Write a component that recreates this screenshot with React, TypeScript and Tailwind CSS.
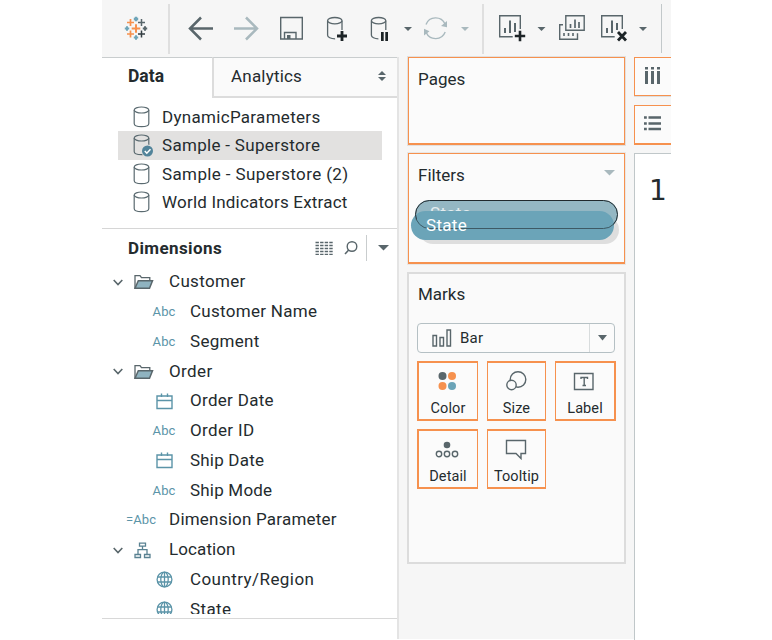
import type { ReactNode } from "react";

type GlyphProps = { x: number; y: number; w: number; h: number; className?: string; children: ReactNode };

// Drawing cell whose viewBox is expressed in window coordinates.
function Glyph({ x, y, w, h, className = "", children }: GlyphProps) {
  return (
    <svg width={w} height={h} viewBox={`${x} ${y} ${w} ${h}`} fill="none" className={`block shrink-0 ${className}`}>
      {children}
    </svg>
  );
}

const slate = "#59666b";
const teal = "#5b94a8";

function Plus({ x, y, r, c, w }: { x: number; y: number; r: number; c: string; w: number }) {
  return <path d={`M${x - r} ${y}H${x + r}M${x} ${y - r}V${y + r}`} stroke={c} strokeWidth={w} />;
}

function Caret({ x, y, c = slate }: { x: number; y: number; c?: string }) {
  return <path d={`M${x - 4} ${y}h8l-4 4z`} fill={c} />;
}

function Separator() {
  return <div className="mt-1 h-[50px] w-0.5 shrink-0 bg-[#dfdfdf]" />;
}

function Toolbar() {
  return (
    <header className="flex h-[57px] shrink-0 bg-[#f6f6f6]">
      <Glyph x={102} y={0} w={66} h={57}>
        <Plus x={136} y={28.5} r={4.3} c="#f6914e" w={2} />
        <Plus x={130.5} y={22.5} r={3.5} c="#f6914e" w={1.7} />
        <Plus x={130.5} y={34} r={3.5} c="#f6914e" w={1.7} />
        <Plus x={141.5} y={22.5} r={3.5} c={slate} w={1.5} />
        <Plus x={141.5} y={34} r={3.5} c="#333d42" w={1.5} />
        <Plus x={136} y={19} r={2.2} c="#6fa5b8" w={2.4} />
        <Plus x={136} y={37.5} r={2.2} c="#6fa5b8" w={2} />
        <Plus x={127} y={28.5} r={2.2} c="#6fa5b8" w={2} />
        <Plus x={145} y={28.5} r={2.2} c={slate} w={2} />
      </Glyph>
      <Separator />
      <Glyph x={170} y={0} w={53} h={57}>
        <path d="M213 28.5H190.5M201 17.5l-11 11 11 11" stroke={slate} strokeWidth="2.5" />
      </Glyph>
      <Glyph x={223} y={0} w={45} h={57}>
        <path d="M234 28.5h22.5M246 17.5l11 11-11 11" stroke="#a9b9be" strokeWidth="2.5" />
      </Glyph>
      <Glyph x={268} y={0} w={47} h={57}>
        <path d="M280.7 17.5h21.6v21.5h-21.6zM284.5 38.5v-6h11.5v6" stroke={slate} strokeWidth="1.4" />
        <path d="M287 35h3.5v4H287z" fill={slate} />
      </Glyph>
      <Glyph x={315} y={0} w={45} h={57}>
        <ellipse cx="334.8" cy="20.7" rx="7.2" ry="3.2" stroke={slate} strokeWidth="1.3" />
        <path d="M327.6 20.7v14.5c0 2 3.2 3.6 7.5 3.6M342 20.7V30" stroke={slate} strokeWidth="1.3" />
        <Plus x={342} y={36} r={5} c="#1d2427" w={2.8} />
      </Glyph>
      <Glyph x={360} y={0} w={37} h={57}>
        <ellipse cx="378.6" cy="20.7" rx="7.2" ry="3.2" stroke={slate} strokeWidth="1.3" />
        <path d="M371.4 20.7v14.5c0 2 3.2 3.6 7 3.6M385.8 20.7V30" stroke={slate} strokeWidth="1.3" />
        <path d="M381 32h2.7v9H381zM385.3 32h2.7v9h-2.7z" fill="#1d2427" />
      </Glyph>
      <Glyph x={397} y={0} w={21} h={57}>
        <Caret x={408} y={27} />
      </Glyph>
      <Glyph x={418} y={0} w={36} h={57}>
        <path d="M426 24.5a10.3 10.3 0 0 1 19-.5M445.2 32a10.3 10.3 0 0 1-19 .5" stroke="#a9b9be" strokeWidth="1.4" />
        <path d="M447 21v6.3l-6-1.3zM424 35.5v-6.8l5.5 2.5z" fill="#a9b9be" />
      </Glyph>
      <Glyph x={454} y={0} w={28} h={57}>
        <Caret x={465} y={27} c="#a9b9be" />
      </Glyph>
      <Separator />
      <Glyph x={484} y={0} w={46} h={57}>
        <path d="M520.3 29V15.8h-20.6v21h13" stroke={slate} strokeWidth="1.4" />
        <path d="M505 33v-5M510 33V20.5M515 32v-9" stroke={slate} strokeWidth="2" />
        <Plus x={520} y={36} r={5.2} c="#1d2427" w={2.6} />
      </Glyph>
      <Glyph x={530} y={0} w={20} h={57}>
        <Caret x={541.5} y={27} />
      </Glyph>
      <Glyph x={550} y={0} w={42} h={57}>
        <path d="M565.8 15.8h18.4v14.4h-18.4zM563 24.7h-3.3v14.6h17.8v-6" stroke={slate} strokeWidth="1.4" />
        <path d="M570.5 28v-4M575 28v-8.5M579 28v-6" stroke={slate} strokeWidth="1.7" />
        <path d="M564 36v-3M568.5 36v-3M573 36v-3" stroke={slate} strokeWidth="1.6" />
      </Glyph>
      <Glyph x={592} y={0} w={41} h={57}>
        <path d="M622.3 29V15.8h-20.6v21h13" stroke={slate} strokeWidth="1.4" />
        <path d="M607 33v-5M612 33V20.5M617 30v-7" stroke={slate} strokeWidth="2" />
        <path d="M618 32l8 8.5M626 32l-8 8.5" stroke="#1d2427" strokeWidth="2.8" />
      </Glyph>
      <Glyph x={633} y={0} w={28} h={57}>
        <Caret x={643} y={27} />
      </Glyph>
      <div className="mt-1 h-[49px] w-px bg-[#c2c8ca]" />
    </header>
  );
}

function SourceIcon({ checked }: { checked?: boolean }) {
  return (
    <svg width="22" height="24" viewBox="0 0 22 24" fill="none" className="shrink-0">
      <ellipse cx="8.5" cy="5" rx="7.3" ry="3" stroke="#5a6a70" strokeWidth="1.2" />
      <path d="M1.2 5v13.4c0 1.9 3.2 3.2 7.3 3.2s7.3-1.3 7.3-3.2V5" stroke="#5a6a70" strokeWidth="1.2" />
      {checked && (
        <>
          <circle cx="14.5" cy="18" r="6.4" fill="#e2e1e0" />
          <circle cx="14.5" cy="18" r="5.5" fill="#52849a" />
          <path d="M11.8 18l2 2.2 3.7-4" stroke="#fff" strokeWidth="1.5" />
        </>
      )}
    </svg>
  );
}

function Source({ name, checked, track }: { name: string; checked?: boolean; track: string }) {
  return (
    <li className={`ml-4 mr-[15px] flex h-[28.3px] items-center pl-[15px] ${checked ? "bg-[#e2e1e0]" : ""}`}>
      <SourceIcon checked={checked} />
      <span className={`ml-[7px] whitespace-nowrap ${track}`}>{name}</span>
    </li>
  );
}

type Kind = "folder" | "tree" | "abc" | "date" | "globe" | "param";

function FieldIcon({ kind }: { kind: Kind }) {
  if (kind === "abc" || kind === "param")
    return <span className="text-[13px] tracking-[0.1px] text-[#5b94a8]">{kind === "param" ? "=Abc" : "Abc"}</span>;
  if (kind === "folder")
    return (
      <svg width="20" height="16" viewBox="0 0 20 16" fill="none">
        <path d="M1 14V1.7h5l1.5 2h8.3v3" stroke={slate} strokeWidth="1.3" />
        <path d="M1 14.2L4.3 6.8H18.5l-3 7.4z" fill="#8fb3c0" stroke={slate} strokeWidth="1.5" />
      </svg>
    );
  if (kind === "tree")
    return (
      <svg width="17" height="17" viewBox="0 0 17 17" fill="none" stroke="#5a8292" strokeWidth="1.3">
        <path d="M5.5 1.2h6v3h-6zM1 12.5h5.5v3H1zM10.5 12.5H16v3h-5.5zM8.5 4.2v3.5M4 12.5V7.7h9v4.8" />
      </svg>
    );
  if (kind === "date")
    return (
      <svg width="17" height="17" viewBox="0 0 17 17" fill="none" stroke={teal} strokeWidth="1.4">
        <path d="M1 3h15v12.5H1zM1 7.5h15M5.5.5V4M11.5.5V4" />
      </svg>
    );
  return (
    <svg width="17" height="17" viewBox="0 0 17 17" fill="none" stroke={teal} strokeWidth="1.3">
      <circle cx="8.5" cy="8.5" r="7.4" />
      <ellipse cx="8.5" cy="8.5" rx="3.7" ry="7.4" />
      <path d="M1.5 6h14M1.5 11h14M8.5 1v15" />
    </svg>
  );
}

function Field({ name, kind, track }: { name: string; kind: Kind; track: string }) {
  const open = kind === "folder" || kind === "tree";
  const nested = kind === "abc" || kind === "date" || kind === "globe";
  return (
    <li className="flex h-[29.75px] items-center">
      {nested ? (
        <div className="flex w-[88px] shrink-0 items-center justify-center pl-9 pt-0.5">
          <FieldIcon kind={kind} />
        </div>
      ) : open ? (
        <div className="flex w-[67px] shrink-0 items-center pl-[11px] pt-0.5">
          <svg width="10" height="7" viewBox="0 0 10 7" fill="none" className="mr-[11px]">
            <path d="M.7 1L5 5.5 9.3 1" stroke={slate} strokeWidth="1.6" />
          </svg>
          <FieldIcon kind={kind} />
        </div>
      ) : (
        <div className="w-[67px] shrink-0 pl-6">
          <FieldIcon kind={kind} />
        </div>
      )}
      <span className={`whitespace-nowrap ${track}`}>{name}</span>
    </li>
  );
}

function DataPane() {
  return (
    <section className="w-[297px] shrink-0 border-r-2 border-[#e4e4e4] bg-white">
      <div className="flex h-[41px]">
        <div className="w-[110px] shrink-0 border-t border-[#c9cdce] pl-[26px] pt-[6px] text-[17.5px] font-bold">Data</div>
        <div className="flex flex-1 items-center justify-between border-b-2 border-l-2 border-t border-b-[#dcdcdc] border-l-[#dcdcdc] border-t-[#c9cdce] bg-[#fafafa] pb-0.5 pl-[17px] pr-[11px]">
          <span className="tracking-[0.2px]">Analytics</span>
          <svg width="8" height="10" viewBox="0 0 8 10" fill={slate}>
            <path d="M0 4h8L4 0zM0 6h8l-4 4z" />
          </svg>
        </div>
      </div>
      <ul className="mt-[5px] h-[125px]">
        <Source name="DynamicParameters" track="tracking-[0.3px]" />
        <Source name="Sample - Superstore" checked track="tracking-[0.31px]" />
        <Source name="Sample - Superstore (2)" track="tracking-[0.38px]" />
        <Source name="World Indicators Extract" track="tracking-[0.2px]" />
      </ul>
      <div className="flex h-[38px] items-center border-t border-[#d6d6d6]">
        <h2 className="w-[213px] pl-[26px] text-[17px] font-bold tracking-[0.4px]">Dimensions</h2>
        <Glyph x={315} y={240} w={18} h={14}>
          <path
            d="M315.5 241.5H333M315.5 244.5H333M315.5 247.5H333M315.5 250.5H333M315.5 253.5H333"
            stroke={slate}
            strokeWidth="1.3"
            strokeDasharray="3.4 1.2"
          />
        </Glyph>
        <Glyph x={333} y={236} w={33} h={24}>
          <circle cx="352" cy="246.5" r="4.8" stroke={slate} strokeWidth="1.4" />
          <path d="M348.7 250l-3.7 4" stroke={slate} strokeWidth="1.6" />
        </Glyph>
        <div className="h-[26px] w-px bg-[#c9cdce]" />
        <Glyph x={367} y={240} w={26} h={16}>
          <path d="M378 245h11l-5.5 5.5z" fill={slate} />
        </Glyph>
      </div>
      <ul className="h-[348px] overflow-hidden pt-[0.6px]">
        <Field name="Customer" kind="folder" track="tracking-[0.33px]" />
        <Field name="Customer Name" kind="abc" track="tracking-[0.29px]" />
        <Field name="Segment" kind="abc" track="tracking-[0.3px]" />
        <Field name="Order" kind="folder" track="tracking-[0.4px]" />
        <Field name="Order Date" kind="date" track="tracking-[0.3px]" />
        <Field name="Order ID" kind="abc" track="tracking-[0.35px]" />
        <Field name="Ship Date" kind="date" track="tracking-[0.2px]" />
        <Field name="Ship Mode" kind="abc" track="tracking-[0.2px]" />
        <Field name="Dimension Parameter" kind="param" track="tracking-[0.22px]" />
        <Field name="Location" kind="tree" track="tracking-[0.1px]" />
        <Field name="Country/Region" kind="globe" track="tracking-[0.43px]" />
        <Field name="State" kind="globe" track="tracking-[0.4px]" />
      </ul>
      <div className="mt-1 border-t border-[#d8d8d8]" />
    </section>
  );
}

function MarkButton({ label, border, children }: { label: string; border: string; children: ReactNode }) {
  return (
    <button className={`flex h-[60px] w-full flex-col items-center border-y-2 border-[#f6914e] bg-[#fbfbfb] pt-[7px] ${border}`}>
      <svg width="26" height="22" viewBox="0 0 26 22" fill="none" stroke={slate} strokeWidth="1.4" className="mr-0.5">
        {children}
      </svg>
      <span className="mt-[7px] text-[14.5px] leading-5 tracking-[0.1px]">{label}</span>
    </button>
  );
}

function Shelves() {
  return (
    <section className="ml-2 w-[219px] shrink-0">
      <div className="mx-px h-[88px] border border-b-2 border-[#f6914e] bg-[#fbfbfb] pl-[9px] pt-[9px] shadow-[0_0_0_1px_#e3e0de]">Pages</div>
      <div className="mx-px mt-2 h-[111px] border border-b-2 border-[#f6914e] bg-[#fbfbfb] shadow-[0_0_0_1px_#e9e7e5]">
        <div className="flex items-center justify-between pl-[9px] pr-[9px] pt-[9px]">
          <span>Filters</span>
          <svg width="11" height="6" viewBox="0 0 11 6" className="mb-1">
            <path d="M0 0h11L5.5 5.5z" fill="#a9b9be" />
          </svg>
        </div>
        <div className="relative ml-[6px] mt-[13px] h-[29px] w-[203px]">
          <div className="absolute left-1 top-4 h-[28px] w-[200px] rounded-full bg-[#dedede]" />
          <div className="absolute inset-0 rounded-full bg-[#94b7c3] pl-[15px] pt-px leading-6 tracking-[0.3px] text-[#e3ecef]">State</div>
          <div className="absolute -left-1 top-[11px] h-[29px] w-[203px] rounded-full bg-[#6ba4b8]" />
          <div className="absolute inset-0 rounded-full border-[1.5px] border-[#20292d]" />
          <div className="absolute left-0 top-[12px] h-[27px] w-[198px] rounded-full bg-[#6ba4b8]/40 pl-[11px] leading-[27px] tracking-[0.3px] text-white">State</div>
        </div>
      </div>
      <div className="mt-2 h-[292px] border-2 border-[#dcdcdc] bg-[#fafafa] px-2 pt-2">
        <div className="pl-px">Marks</div>
        <div className="mt-[17px] flex h-[30px] w-[198px] items-center rounded-sm border border-[#b5c0c4] bg-[#fbfbfb]">
          <svg width="20" height="18" viewBox="0 0 20 18" fill="none" stroke={slate} strokeWidth="1.4" className="ml-3.5">
            <path d="M1 6.5h3.5V17H1zM8 8.5h3.5V17H8zM15 1h3.5v16H15z" />
          </svg>
          <span className="ml-[8px] flex-1 text-[15px] tracking-[0.2px]">Bar</span>
          <div className="flex h-full w-[25px] items-center justify-center border-l border-[#d8dcdd]">
            <svg width="9" height="6" viewBox="0 0 9 6" fill={slate}>
              <path d="M0 0h9L4.5 5.5z" />
            </svg>
          </div>
        </div>
        <div className="mt-2 grid w-[199px] grid-cols-[61px_59px_61px] gap-x-[9px] gap-y-2">
          <MarkButton label="Color" border="border-l-2 border-r">
            <circle cx="8.5" cy="6" r="4" fill={slate} stroke="none" />
            <circle cx="18" cy="6" r="4" fill="#f6914e" stroke="none" />
            <circle cx="8.5" cy="16" r="4" fill="#f6914e" stroke="none" />
            <circle cx="18" cy="16" r="4" fill="#6ba4b8" stroke="none" />
          </MarkButton>
          <MarkButton label="Size" border="border-x">
            <circle cx="15" cy="9.5" r="7.8" />
            <circle cx="8.5" cy="15" r="4.7" fill="#fbfbfb" />
          </MarkButton>
          <MarkButton label="Label" border="border-l border-r-2">
            <path d="M3.5 3.5h18.5v16H3.5zM10 9V7.5h6.5V9M13.2 7.5v8M11.5 15.5h3.5" />
          </MarkButton>
          <MarkButton label="Detail" border="border-l-2 border-r">
            <circle cx="13" cy="7" r="3.3" fill={slate} stroke="none" />
            <circle cx="5" cy="16" r="2.7" />
            <circle cx="13" cy="16" r="2.7" />
            <circle cx="21" cy="16" r="2.7" />
          </MarkButton>
          <MarkButton label="Tooltip" border="border-x">
            <path d="M3.5 2.5h19v13H18v5l-5-5H3.5z" />
          </MarkButton>
        </div>
      </div>
    </section>
  );
}

function Sheet() {
  return (
    <section className="ml-2 flex-1">
      <div className="h-[39px] border border-r-0 border-[#f6914e] bg-[#fbfbfb] shadow-[0_1px_0_#dedede]">
        <Glyph x={635} y={58} w={36} h={37}>
          <path
            d="M646.5 71v13M652.5 71v13M658.5 71v13M646.5 67v2.5M652.5 67v2.5M658.5 67v2.5"
            stroke={slate}
            strokeWidth="3"
          />
        </Glyph>
      </div>
      <div className="mt-[9px] h-10 border border-b-2 border-r-0 border-[#f6914e] bg-[#fbfbfb]">
        <Glyph x={635} y={106} w={36} h={37}>
          <path
            d="M648.5 117.5H661M648.5 123.5H661M648.5 129H661M644 117.5h2.8M644 123.5h2.8M644 129h2.8"
            stroke={slate}
            strokeWidth="2.4"
          />
        </Glyph>
      </div>
      <div className="mt-2 h-[487px] border-l border-t border-[#c0c7c9] bg-white pl-[14px] pt-[17px] font-['DejaVu_Sans',sans-serif] text-[28px] leading-10">
        1
      </div>
    </section>
  );
}

export default function App() {
  return (
    <div className="h-[640px] w-[772px] overflow-hidden bg-white pl-[102px] font-[Roboto,'Liberation_Sans',sans-serif] text-[17px] leading-6 text-[#242b2e]">
      <div className="flex h-[639px] w-[569px] flex-col bg-[#f6f6f6]">
        <Toolbar />
        <main className="flex min-h-0 flex-1">
          <DataPane />
          <Shelves />
          <Sheet />
        </main>
      </div>
    </div>
  );
}
